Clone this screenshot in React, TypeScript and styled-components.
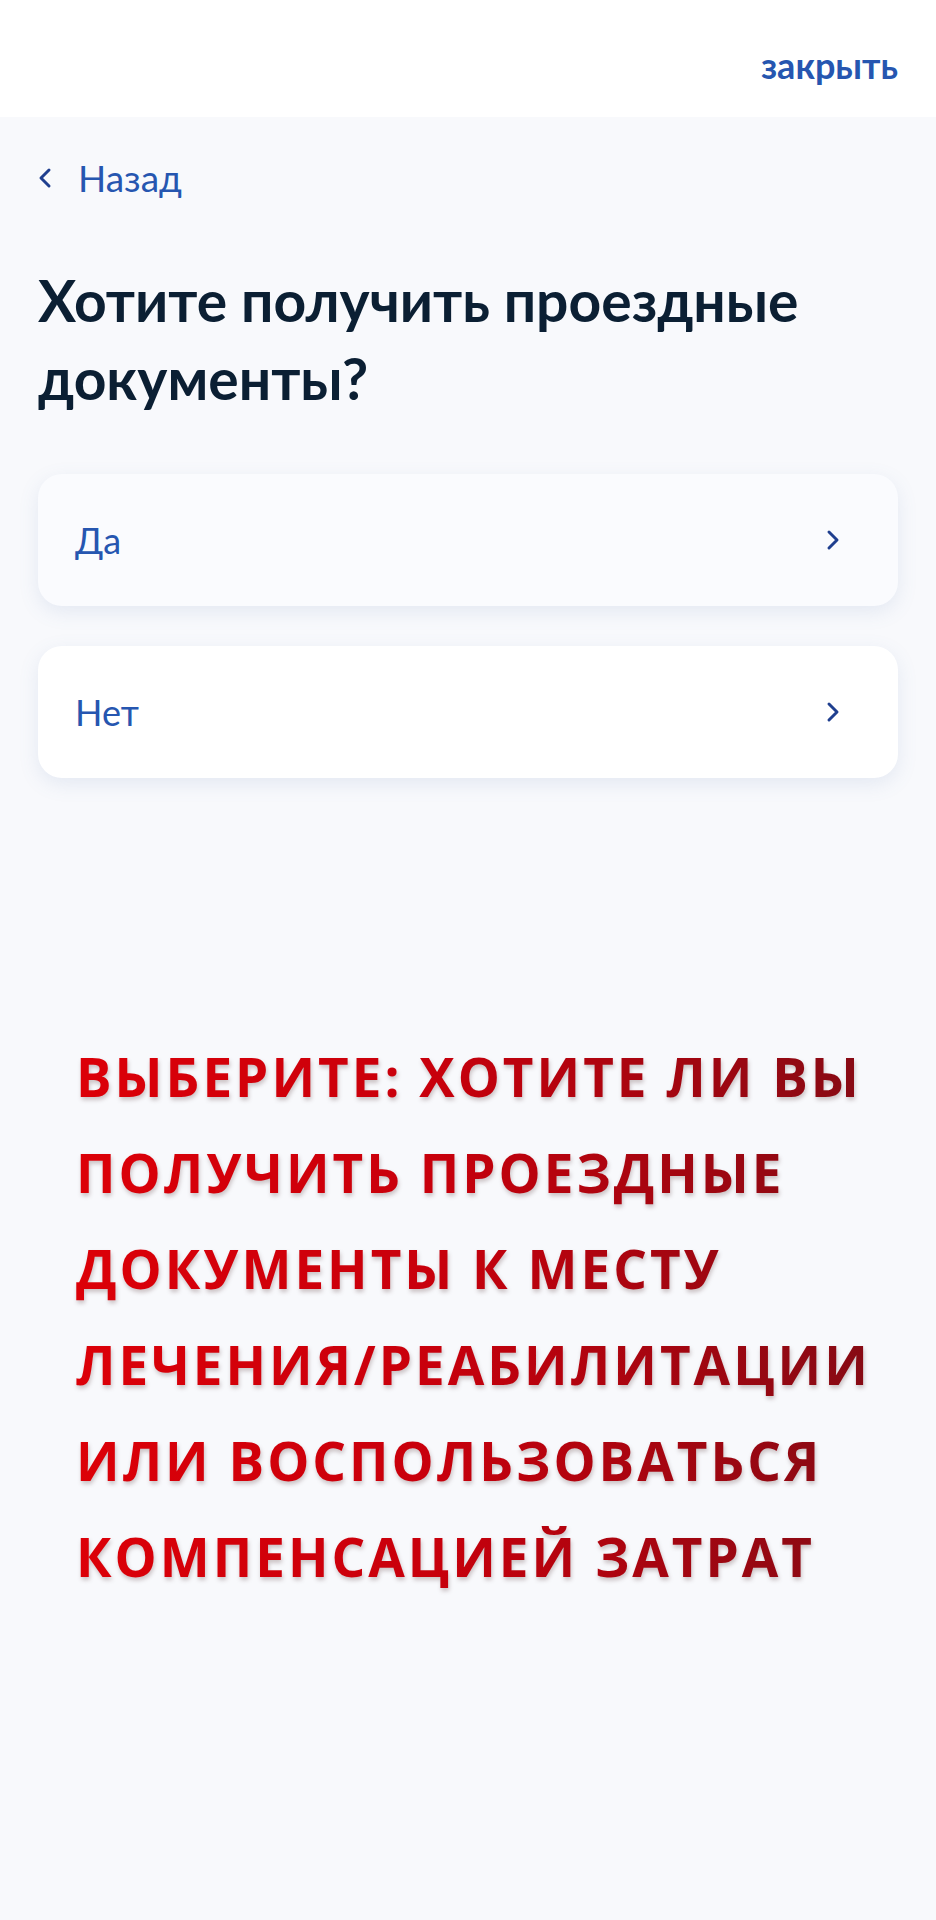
import React from 'react';
import styled, { createGlobalStyle } from 'styled-components';

const GlobalStyle = createGlobalStyle`
  * {
    box-sizing: border-box;
  }
  body {
    margin: 0;
    background: #f8f9fc;
    font-family: Lato, 'Noto Sans', sans-serif;
  }
`;

const answers = ['Да', 'Нет'];

const hintLines = [
  'ВЫБЕРИТЕ: ХОТИТЕ ЛИ ВЫ',
  'ПОЛУЧИТЬ ПРОЕЗДНЫЕ',
  'ДОКУМЕНТЫ К МЕСТУ',
  'ЛЕЧЕНИЯ/РЕАБИЛИТАЦИИ',
  'ИЛИ ВОСПОЛЬЗОВАТЬСЯ',
  'КОМПЕНСАЦИЕЙ ЗАТРАТ',
];

function Chevron({ left }: { left?: boolean }) {
  return (
    <svg width='14' height='22' viewBox='0 0 14 22' fill='none'>
      <path
        d={left ? 'M11 3L3 11L11 19' : 'M3 3L11 11L3 19'}
        stroke='#1f3f8f'
        strokeWidth='3'
        strokeLinecap='round'
        strokeLinejoin='round'
      />
    </svg>
  );
}

export default function App() {
  return (
    <Page>
      <GlobalStyle />
      <Header>
        <CloseLink>закрыть</CloseLink>
      </Header>
      <Main>
        <BackLink>
          <Chevron left />
          Назад
        </BackLink>
        <Title>Хотите получить проездные документы?</Title>
        <Options>
          {answers.map((answer, i) => (
            <Option key={answer} $tinted={i === 0}>
              <OptionLabel>{answer}</OptionLabel>
              <Chevron />
            </Option>
          ))}
        </Options>
        <Hint>
          {hintLines.map((line) => (
            <HintLine key={line}>{line}</HintLine>
          ))}
        </Hint>
      </Main>
    </Page>
  );
}

const Page = styled.div`
  width: 936px;
  min-height: 1920px;
  background: #f8f9fc;
`;

const Header = styled.header`
  height: 117px;
  background: #ffffff;
  display: flex;
  align-items: center;
  justify-content: flex-end;
  padding: 12px 38px 0 0;
`;

const CloseLink = styled.a`
  font-size: 36px;
  line-height: 1;
  font-weight: 700;
  color: #2656b0;
  cursor: pointer;
`;

const Main = styled.main`
  display: flex;
  flex-direction: column;
  padding: 39px 38px 0;
`;

const BackLink = styled.a`
  display: flex;
  align-items: center;
  gap: 26px;
  height: 44px;
  font-size: 37px;
  line-height: 44px;
  color: #2656b0;
  cursor: pointer;
`;

const Title = styled.h1`
  margin: 61px 0 0;
  font-size: 57px;
  line-height: 78px;
  font-weight: 700;
  color: #0b1f33;
  max-width: 820px;
`;

const Options = styled.div`
  display: flex;
  flex-direction: column;
  gap: 40px;
  margin-top: 57px;
`;

const Option = styled.button<{ $tinted?: boolean }>`
  display: flex;
  align-items: center;
  justify-content: space-between;
  height: 132px;
  padding: 0 58px 0 37px;
  border: none;
  border-radius: 24px;
  background: ${(p) => (p.$tinted ? '#fafbfe' : '#ffffff')};
  box-shadow: 0 6px 20px rgba(90, 120, 180, 0.13);
  font-family: inherit;
  cursor: pointer;
`;

const OptionLabel = styled.span`
  font-size: 36px;
  color: #2656b0;
`;

const Hint = styled.div`
  display: flex;
  flex-direction: column;
  align-self: flex-start;
  margin: 251px 0 0 38px;
  font-family: 'Open Sans', sans-serif;
  font-weight: 700;
  font-size: 53px;
  letter-spacing: 3px;
  line-height: 96px;
  background: linear-gradient(90deg, #dc0008 0%, #c8000c 45%, #860a14 100%);
  -webkit-background-clip: text;
  background-clip: text;
  color: transparent;
  filter: drop-shadow(1px 3px 2px rgba(40, 0, 0, 0.22));
`;

const HintLine = styled.span`
  display: block;
  white-space: nowrap;
`;
